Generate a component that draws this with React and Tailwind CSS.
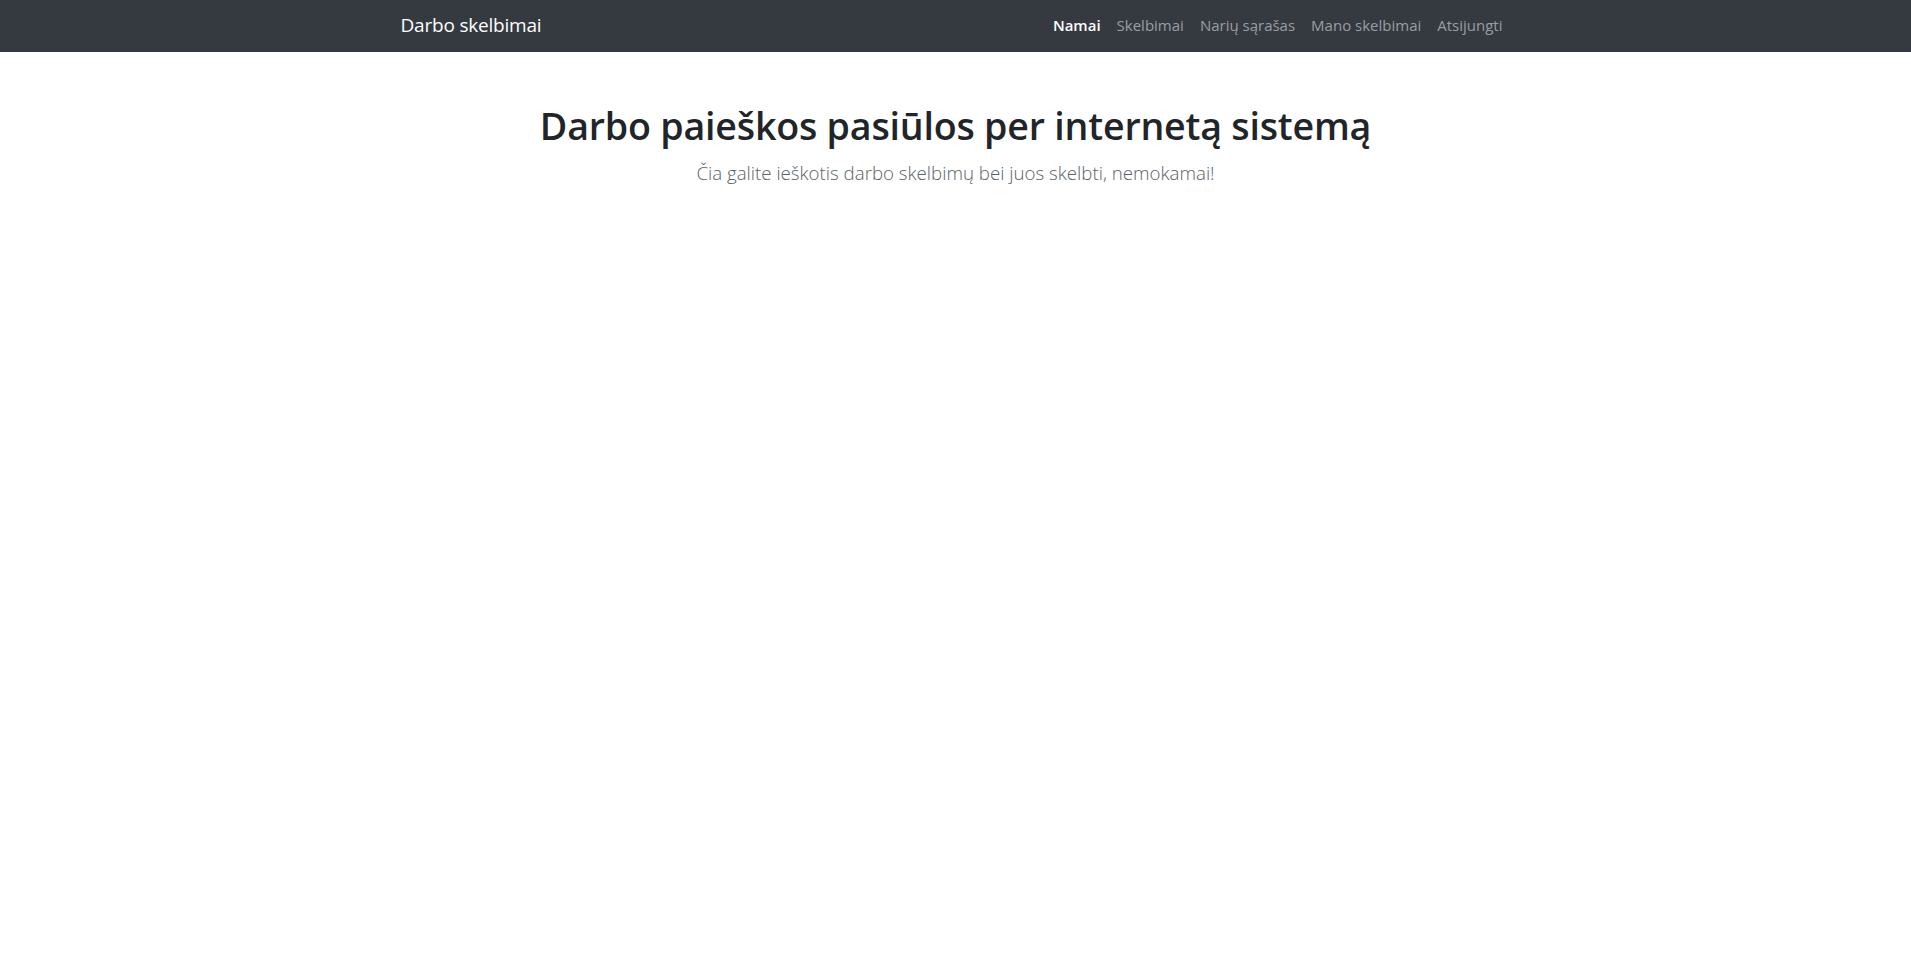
import React from "react";

const links = [
  { label: "Namai", active: true },
  { label: "Skelbimai" },
  { label: "Narių sąrašas" },
  { label: "Mano skelbimai" },
  { label: "Atsijungti" },
];

const App = () => {
  return (
    <div className="min-h-screen bg-white font-['Open_Sans',sans-serif]">
      <nav className="bg-[#343a40] h-[52px]">
        <div className="w-[1110px] mx-auto h-full flex items-center justify-between pb-[2px]">
          <a href="#" className="text-white text-[19px] tracking-[-0.2px]">
            Darbo skelbimai
          </a>
          <ul className="flex items-center">
            {links.map((link) => (
              <li key={link.label}>
                <a
                  href="#"
                  className={
                    link.active
                      ? "block px-2 text-[15px] font-semibold text-white"
                      : "block px-2 text-[15px] text-[#9a9da0]"
                  }
                >
                  {link.label}
                </a>
              </li>
            ))}
          </ul>
        </div>
      </nav>

      <div className="w-[1110px] mx-auto pt-[51px] text-center">
        <h1 className="text-[37.6px] leading-[1.2] font-semibold text-[#212529] tracking-[-0.2px]">
          Darbo paieškos pasiūlos per internetą sistemą
        </h1>
        <p className="mt-[11px] text-[18.7px] font-light text-[#5a6268]">
          Čia galite ieškotis darbo skelbimų bei juos skelbti, nemokamai!
        </p>
      </div>
    </div>
  );
};

export default App;
